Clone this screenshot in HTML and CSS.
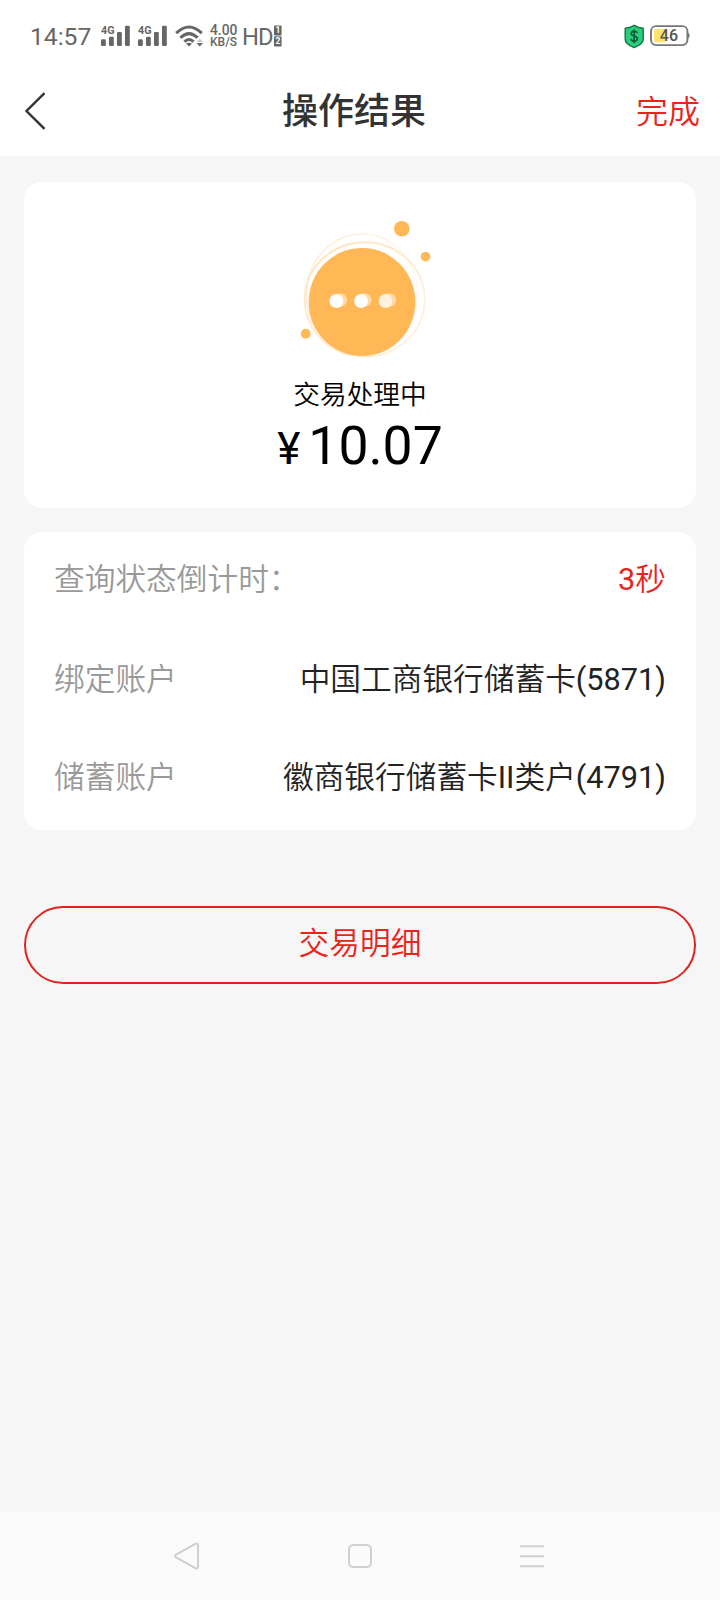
FILE: index.html
```html
<!DOCTYPE html>
<html lang="zh-CN">
<head>
<meta charset="utf-8">
<title>操作结果</title>
<link rel="stylesheet" href="styles.css">
</head>
<body>
<div class="screen">
  <div class="status">
    <span class="time">14:57</span>
    <svg class="signal" width="30" height="26" viewBox="0 -4 30 26"><text x="0" y="9.3" class="gen" textLength="13.5" lengthAdjust="spacingAndGlyphs">4G</text><rect x="0" y="14.3" width="4.8" height="6.7" rx="1.2"/><rect x="8" y="11.7" width="4.8" height="9.3" rx="1.2"/><rect x="16" y="7" width="4.8" height="14" rx="1.2"/><rect x="24" y="0.8" width="4.8" height="20.2" rx="1.2"/></svg>
    <svg class="signal second" width="30" height="26" viewBox="0 -4 30 26"><text x="0" y="9.3" class="gen" textLength="13.5" lengthAdjust="spacingAndGlyphs">4G</text><rect x="0" y="14.3" width="4.8" height="6.7" rx="1.2"/><rect x="8" y="11.7" width="4.8" height="9.3" rx="1.2"/><rect x="16" y="7" width="4.8" height="14" rx="1.2"/><rect x="24" y="0.8" width="4.8" height="20.2" rx="1.2"/></svg>
    <svg class="wifi" width="30" height="22" viewBox="0 0 30 22"><g fill="none" stroke="#666" stroke-width="3"><path d="M1.2 8.2Q14 -4.2 26.8 8.2"/><path d="M5.4 12.8Q14 4.4 22.6 12.8"/><path d="M9.4 16.6Q14 12.4 18.6 16.6"/></g><path d="M11 18.6Q14 17 17 18.6L14 21.4z" fill="#666"/><path d="M21.6 17L24.8 13.4L28 17z" fill="#ccc"/><path d="M21.6 18H28L24.8 21.6z" fill="#666"/></svg>
    <span class="speed"><span class="rate">4.00</span><span class="unit">KB/S</span></span>
    <span class="hd">HD</span>
    <svg class="sims" width="8" height="22" viewBox="0 0 8 22"><rect y="0.4" width="7.6" height="10" rx="1.2" fill="#666"/><rect y="11.2" width="7.6" height="10.2" rx="1.2" fill="#666"/><text x="1.4" y="8.4" class="sim">1</text><text x="1.4" y="19.3" class="sim">2</text></svg>
    <svg class="shield" width="21" height="25" viewBox="0 0 21 25"><path d="M10.2 1.3Q14.5 4 19.2 4.2V15.5Q19.2 20 10.2 23.6Q1.2 20 1.2 15.5V4.2Q6 4 10.2 1.3z" fill="#2dcb7d" stroke="#0c7743" stroke-width="1.4" stroke-linejoin="round"/><path d="M13.3 8.9Q12.8 7.4 10.2 7.4Q7.2 7.4 7.2 9.6Q7.2 11.5 10.2 12Q13.4 12.6 13.4 14.7Q13.4 17 10.2 17Q7.3 17 6.9 15M10.2 5.2V19.2" fill="none" stroke="#0a5c36" stroke-width="1.6"/></svg>
    <svg class="battery" width="41" height="22" viewBox="0 0 41 22"><rect x="1" y="1.1" width="36.4" height="19" rx="5" fill="#fff" stroke="#777" stroke-width="1.9"/><path d="M38 7.5Q41.4 10.6 38 13.7z" fill="#777"/><path d="M6.5 4H15V17.2H6.5Q4 17.2 4 14.7V6.5Q4 4 6.5 4z" fill="#fde36b"/><text x="9.8" y="16.3" class="charge">46</text></svg>
  </div>

  <header class="titlebar">
    <svg class="back" width="24" height="42" viewBox="0 0 24 42"><path d="M20.5 3.2L2.5 21L20.5 38.8" fill="none" stroke="#333" stroke-width="2.4"/></svg>
    <h1 class="title">操作结果</h1>
    <span class="done">完成</span>
  </header>

  <main class="content">
    <section class="card result">
      <svg class="art" width="144" height="144" viewBox="288 216 144 144">
        <defs>
          <linearGradient id="fadeA" x1="0" y1="0" x2="1" y2="0.3"><stop offset="0" stop-color="#ffecd4"/><stop offset="1" stop-color="#fff8ef"/></linearGradient>
          <linearGradient id="fadeB" x1="0" y1="0" x2="1" y2="1"><stop offset="0" stop-color="#ffe3bf"/><stop offset="1" stop-color="#fff3e3"/></linearGradient>
        </defs>
        <ellipse cx="362" cy="295" rx="55.5" ry="61" fill="none" stroke="url(#fadeA)" stroke-width="1.7"/>
        <ellipse cx="364.7" cy="299.5" rx="60" ry="57.2" fill="none" stroke="url(#fadeB)" stroke-width="1.9"/>
        <ellipse cx="362" cy="302" rx="53.3" ry="54" fill="#ffb855"/>
        <g fill="#ffb855"><circle cx="401.8" cy="228.7" r="7.8"/><circle cx="425.5" cy="256.7" r="4.8"/><circle cx="305.7" cy="333.7" r="4.9"/></g>
        <g fill="#ffd9a3"><circle cx="340.2" cy="300" r="6.8"/><circle cx="364.6" cy="300" r="6.8"/><circle cx="389.3" cy="300" r="6.8"/></g>
        <circle cx="336.4" cy="301" r="6.9" fill="#fff"/><circle cx="361" cy="301" r="6.9" fill="#fff"/><circle cx="385.6" cy="301" r="6.9" fill="#fff1e0"/>
      </svg>
      <p class="state">交易处理中</p>
      <p class="amount"><span class="yen">¥</span>10.07</p>
    </section>

    <section class="card details">
      <div class="row"><span class="label">查询状态倒计时：</span><span class="value countdown">3秒</span></div>
      <div class="row"><span class="label">绑定账户</span><span class="value">中国工商银行储蓄卡(5871)</span></div>
      <div class="row"><span class="label">储蓄账户</span><span class="value">徽商银行储蓄卡II类户(4791)</span></div>
    </section>

    <button class="history">交易明细</button>
  </main>

  <nav class="navbar">
    <svg width="28" height="30" viewBox="0 0 28 30"><path d="M3 13.7L22.3 2.8Q25 1.6 25 4.6V25.4Q25 28.4 22.3 27.2L3 16.3Q1 15 3 13.7z"/></svg>
    <svg width="28" height="30" viewBox="0 0 28 30"><rect x="3" y="4" width="22" height="22" rx="4.5"/></svg>
    <svg width="28" height="30" viewBox="0 0 28 30"><path d="M1 5.2H25M1 15.2H25M1 25.2H25"/></svg>
  </nav>
</div>
</body>
</html>
```
FILE: styles.css
```css
* { box-sizing: border-box; }
body { margin: 0; font-family: Roboto, "Noto Sans CJK SC DemiLight", "Noto Sans CJK SC", sans-serif; }
h1, p { margin: 0; font-weight: 400; }
svg { display: block; flex: none; }

.screen { width: 720px; height: 1600px; display: flex; flex-direction: column; background: #f6f6f6; }

.status { height: 72px; padding: 25px 30px 0; display: flex; align-items: flex-start; background: #fff; color: #666; }
.time { width: 71px; font-size: 24.6px; line-height: 24px; }
.signal { margin-top: -4px; fill: #666; }
.second { margin-left: 7px; }
.gen { font-size: 11.5px; font-weight: 700; }
.wifi { margin-left: 7px; }
.speed { width: 34px; margin-left: 5px; display: flex; flex-direction: column; font-weight: 500; }
.rate { font-size: 13.8px; line-height: 11px; }
.unit { font-size: 12px; line-height: 12px; }
.hd { width: 32px; margin-left: -2px; font-size: 23.8px; line-height: 24px; letter-spacing: -1px; }
.sim { font-size: 8.5px; font-weight: 700; fill: #fff; }
.shield { margin: -1px 5px 0 auto; }
.battery { margin-right: -1px; }
.charge { font-size: 16px; font-weight: 500; fill: #555; }

.titlebar { height: 84px; padding: 0 20px 4px 24px; display: grid; grid-template-columns: 80px 1fr 96px; align-items: center; background: #fff; }
.back { margin-top: -2px; }
.title { font-family: Roboto, "Noto Sans CJK SC", sans-serif; font-size: 36px; line-height: 48px; font-weight: 500; color: #333; text-align: center; }
.done { font-size: 32px; line-height: 46px; color: #e8241b; text-align: right; }

.content { flex: 1; padding: 26px 24px 0; display: flex; flex-direction: column; }
.card { background: #fff; border-radius: 18px; }
.result { height: 326px; padding-top: 34px; display: flex; flex-direction: column; align-items: center; color: #000; }
.state { margin-top: 15px; font-size: 26.7px; line-height: 40px; }
.amount { font-size: 53.5px; line-height: 62px; }
.yen { margin-right: 8px; font-size: 44px; }

.details { height: 298px; margin-top: 24px; padding: 0 30px; }
.row { height: 92px; display: flex; justify-content: space-between; align-items: center; font-size: 30.7px; line-height: 40px; white-space: nowrap; }
.row:first-child { height: 96px; }
.row:nth-child(2) { height: 104px; }
.label { color: #999; }
.value { color: #222; }
.countdown { color: #e8241b; }

.history { height: 78px; margin-top: 76px; padding: 0 0 2px; border: 2px solid #dd261f; border-radius: 39px; background: transparent; color: #e8241b; font: 30.7px/40px Roboto, "Noto Sans CJK SC DemiLight", "Noto Sans CJK SC", sans-serif; }

.navbar { height: 88px; padding: 0 173px 0 173px; display: flex; justify-content: space-between; align-items: center; background: #fafafa; }
.navbar svg { fill: none; stroke: #cfcfcf; stroke-width: 2; }
```
